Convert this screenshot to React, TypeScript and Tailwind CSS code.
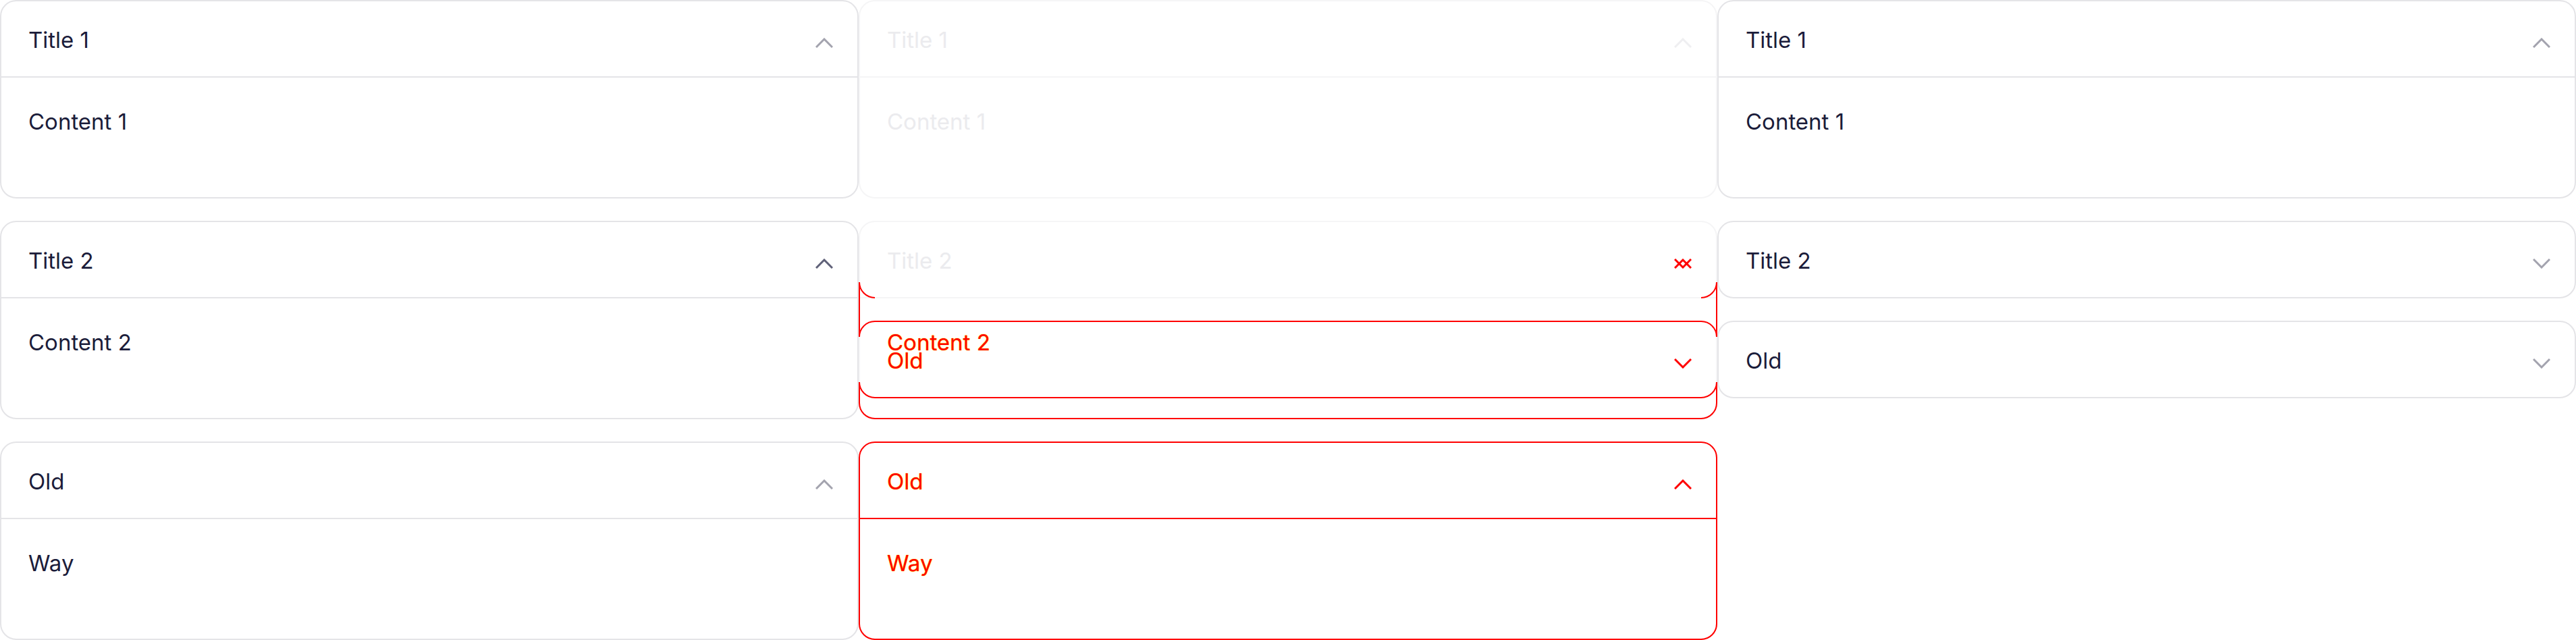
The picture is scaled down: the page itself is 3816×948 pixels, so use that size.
import type { ReactNode } from "react";

type Tone = "normal" | "dark" | "ghost" | "red";

const font = "font-['Inter',sans-serif]";

const textTone: Record<Tone, string> = {
  normal: "text-[#1b1c3a]",
  dark: "text-[#1b1c3a]",
  ghost: "text-[#ebebee]",
  red: "text-[#ff0000] [text-shadow:0_0_1px_#ffee00,0_0_1px_#ffee00]",
};

const chevronTone: Record<Tone, string> = {
  normal: "text-[#a3a3ae]",
  dark: "text-[#5f6178]",
  ghost: "text-[#efeff1]",
  red: "text-[#ff0000]",
};

const borderTone: Record<Tone, string> = {
  normal: "border-[#e4e4e7]",
  dark: "border-[#e4e4e7]",
  ghost: "border-[#f5f5f6]",
  red: "border-[#ff0000]",
};

function Chevron({ up, className = "" }: { up: boolean; className?: string }) {
  return (
    <svg width="26" height="15" viewBox="0 0 26 15" fill="none" className={className}>
      <path d={up ? "M1 14 13 2l12 12" : "M1 1l12 12L25 1"} stroke="currentColor" strokeWidth="3" />
    </svg>
  );
}

function Header({ title, tone, icon }: { title: string; tone: Tone; icon: ReactNode }) {
  return (
    <div className="flex h-[111px] items-center justify-between pl-[40px] pr-[36px] pt-[3px]">
      <span className={`text-[33px] leading-[40px] ${textTone[tone]}`}>{title}</span>
      <span className={`translate-y-[4px] ${chevronTone[tone]}`}>{icon}</span>
    </div>
  );
}

function Card({
  title,
  body,
  tone = "normal",
  open = true,
}: {
  title: string;
  body?: string;
  tone?: Tone;
  open?: boolean;
}) {
  return (
    <div className={`rounded-[24px] border-2 ${borderTone[tone]} bg-white`}>
      <Header title={title} tone={tone} icon={<Chevron up={open} />} />
      {open && (
        <div className={`h-[179px] border-t-2 px-[40px] pt-[45px] ${borderTone[tone]}`}>
          <span className={`text-[33px] leading-[40px] ${textTone[tone]}`}>{body}</span>
        </div>
      )}
    </div>
  );
}

// middle column, row 2: faint left card with red diff marks on top
function DiffCard() {
  const red = "border-[#ff0000]";
  return (
    <div className="relative h-[294px]">
      <div className="h-full rounded-[24px] border-2 border-[#f5f5f6]">
        <Header
          title="Title 2"
          tone="ghost"
          icon={
            <span className="relative block text-[#ff0000]">
              <Chevron up />
              <Chevron up={false} className="absolute inset-0" />
            </span>
          }
        />
        <div className="h-[179px] border-t-2 border-[#f5f5f6] px-[40px] pt-[45px]">
          <span className={`text-[33px] leading-[40px] ${textTone.red}`}>Content 2</span>
        </div>
      </div>

      <div className={`absolute left-0 top-[91px] h-[24px] w-[24px] rounded-bl-[24px] border-b-2 border-l-2 ${red}`} />
      <div className={`absolute right-0 top-[91px] h-[24px] w-[24px] rounded-br-[24px] border-b-2 border-r-2 ${red}`} />
      <div className={`absolute inset-x-0 top-[91px] h-[80px] border-x-2 ${red}`} />

      <div className={`absolute inset-x-0 top-[148px] h-[115px] rounded-[24px] border-2 ${red}`}>
        <div className="absolute -left-[2px] top-[22px] h-[67px] w-[2px] bg-[#f5f5f6]" />
        <div className="absolute -right-[2px] top-[22px] h-[67px] w-[2px] bg-[#f5f5f6]" />
        <Header title="Old" tone="red" icon={<Chevron up={false} />} />
      </div>

      <div className={`absolute inset-x-0 bottom-0 top-[239px] rounded-b-[24px] border-x-2 border-b-2 ${red}`} />
    </div>
  );
}

export default function App() {
  return (
    <div className={`flex h-[948px] w-[3816px] bg-white ${font}`}>
      <div className="flex w-[1272px] flex-col gap-[33px]">
        <Card title="Title 1" body="Content 1" />
        <Card title="Title 2" body="Content 2" tone="dark" />
        <Card title="Old" body="Way" />
      </div>

      <div className="flex w-[1272px] flex-col gap-[33px]">
        <Card title="Title 1" body="Content 1" tone="ghost" />
        <DiffCard />
        <Card title="Old" body="Way" tone="red" />
      </div>

      <div className="flex w-[1272px] flex-col gap-[33px]">
        <Card title="Title 1" body="Content 1" />
        <Card title="Title 2" open={false} />
        <Card title="Old" open={false} />
      </div>
    </div>
  );
}
